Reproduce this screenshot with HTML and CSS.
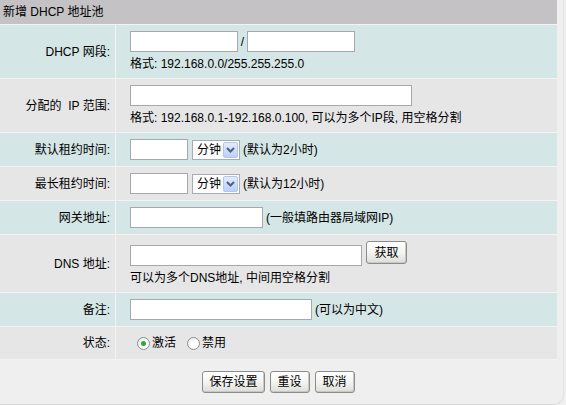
FILE: index.html
```html
<!DOCTYPE html>
<html lang="zh-CN">
<head>
<meta charset="utf-8">
<title>新增 DHCP 地址池</title>
<link rel="stylesheet" href="styles.css">
</head>
<body>
<div class="panel">
  <div class="form">
    <div class="title">新增 DHCP 地址池</div>

    <div class="row">
      <div class="lbl teal">DHCP 网段:</div>
      <div class="val teal">
        <div class="line">
          <input class="in w108" type="text"><span class="slash">/</span><input class="in w108" type="text">
        </div>
        <div class="hint">格式: 192.168.0.0/255.255.255.0</div>
      </div>
    </div>

    <div class="row">
      <div class="lbl grey">分配的&nbsp; IP 范围:</div>
      <div class="val grey">
        <div class="line"><input class="in w282" type="text"></div>
        <div class="hint">格式: 192.168.0.1-192.168.0.100, 可以为多个IP段, 用空格分割</div>
      </div>
    </div>

    <div class="row">
      <div class="lbl teal">默认租约时间:</div>
      <div class="val teal">
        <div class="line">
          <input class="in w58" type="text">
          <div class="select"><span class="opt">分钟</span><span class="arrow"><svg width="9" height="6" viewBox="0 0 9 6"><path d="M1 1 L4.5 4.5 L8 1" fill="none" stroke="#4d6185" stroke-width="2"/></svg></span></div>
          <span class="note">(默认为2小时)</span>
        </div>
      </div>
    </div>

    <div class="row">
      <div class="lbl grey">最长租约时间:</div>
      <div class="val grey">
        <div class="line">
          <input class="in w58" type="text">
          <div class="select"><span class="opt">分钟</span><span class="arrow"><svg width="9" height="6" viewBox="0 0 9 6"><path d="M1 1 L4.5 4.5 L8 1" fill="none" stroke="#4d6185" stroke-width="2"/></svg></span></div>
          <span class="note">(默认为12小时)</span>
        </div>
      </div>
    </div>

    <div class="row">
      <div class="lbl teal">网关地址:</div>
      <div class="val teal">
        <div class="line">
          <input class="in w133" type="text"><span class="note">(一般填路由器局域网IP)</span>
        </div>
      </div>
    </div>

    <div class="row">
      <div class="lbl grey">DNS 地址:</div>
      <div class="val grey">
        <div class="line top">
          <input class="in w232 drop" type="text"><button class="btn small" type="button">获取</button>
        </div>
        <div class="hint">可以为多个DNS地址, 中间用空格分割</div>
      </div>
    </div>

    <div class="row">
      <div class="lbl teal">备注:</div>
      <div class="val teal">
        <div class="line">
          <input class="in w182" type="text"><span class="note">(可以为中文)</span>
        </div>
      </div>
    </div>

    <div class="row">
      <div class="lbl grey">状态:</div>
      <div class="val grey radios">
        <label class="radio"><span class="dot checked"></span>激活</label>
        <label class="radio"><span class="dot"></span>禁用</label>
      </div>
    </div>

    <div class="actions">
      <button class="btn" type="button">保存设置</button>
      <button class="btn" type="button">重设</button>
      <button class="btn" type="button">取消</button>
    </div>
  </div>
</div>
</body>
</html>
```

FILE: styles.css
```css
* { box-sizing: border-box; }
html, body {
  margin: 0;
  padding: 0;
  background: #efefef;
}
body {
  font-family: "Liberation Sans", "Noto Sans CJK SC", sans-serif;
  font-size: 12px;
  line-height: 16px;
  color: #000;
}
.panel {
  width: 564px;
  height: 405px;
  background: #efefef;
  border-right: 1px solid #e2e2e2;
  border-bottom: 1px solid #d8d8d8;
  border-bottom-right-radius: 10px;
  overflow: hidden;
}
.form {
  width: 557px;
  display: flex;
  flex-direction: column;
  gap: 1px;
  background: #f3f3f3;
}
.title {
  height: 24px;
  background: #c4c2c4;
  padding: 4px 3px;
  white-space: pre;
}
.row {
  display: grid;
  grid-template-columns: 115px 1fr;
  gap: 1px;
}
.teal { background: #d4e6e5; }
.grey { background: #e6e6e6; }
.lbl {
  display: flex;
  align-items: center;
  justify-content: flex-end;
  padding-right: 5px;
  white-space: pre;
}
.val {
  display: flex;
  flex-direction: column;
  justify-content: center;
  gap: 4px;
  padding: 6px 0 6px 14px;
}
.line {
  display: flex;
  align-items: center;
}
.line.top { align-items: flex-start; }
.in {
  height: 21px;
  border: 1px solid #a5a9ad;
  background: #fff;
  margin: 0;
  padding: 0 2px;
  font: inherit;
}
.in.drop { margin-top: 4px; }
.w108 { width: 108px; }
.w282 { width: 282px; }
.w58 { width: 58px; }
.w133 { width: 133px; }
.w232 { width: 232px; }
.w182 { width: 182px; }
.slash { width: 9px; text-align: center; }
.hint { height: 16px; white-space: nowrap; }
.note { margin-left: 3px; white-space: nowrap; }
.select {
  margin-left: 4px;
  width: 48px;
  height: 20px;
  border: 1px solid #a5acb2;
  background: #fff;
  display: flex;
  align-items: center;
  justify-content: space-between;
  padding: 1px;
}
.opt { padding-left: 3px; }
.arrow {
  width: 15px;
  height: 16px;
  border: 1px solid #b3c6ee;
  border-radius: 2px;
  background: linear-gradient(#e3ebfd, #bccff5);
  display: flex;
  align-items: center;
  justify-content: center;
}
.radios {
  flex-direction: row;
  justify-content: flex-start;
  align-items: center;
  gap: 11px;
  padding: 8px 0 8px 21px;
}
.radio {
  display: flex;
  align-items: center;
  gap: 2px;
}
.dot {
  width: 13px;
  height: 13px;
  border-radius: 50%;
  border: 1px solid #8c9196;
  background: radial-gradient(circle at 60% 60%, #ffffff 30%, #e2e2df 100%);
  display: flex;
  align-items: center;
  justify-content: center;
}
.dot.checked::after {
  content: "";
  width: 5px;
  height: 5px;
  border-radius: 50%;
  background: #2fa82f;
}
.actions {
  background: #efefef;
  display: flex;
  justify-content: center;
  gap: 5px;
  padding-top: 11px;
  height: 46px;
}
.btn {
  font: inherit;
  color: #000;
  height: 22px;
  min-width: 40px;
  padding: 0 6px;
  margin: 0;
  border: 1px solid #8c8c8c;
  border-radius: 3px;
  background: linear-gradient(#ffffff, #f4f4f2 50%, #dcdcd8);
  box-shadow: inset -1px -1px 0 #c8c8c4;
}
.btn.small {
  margin-left: 4px;
  height: 23px;
  width: 41px;
}
```
